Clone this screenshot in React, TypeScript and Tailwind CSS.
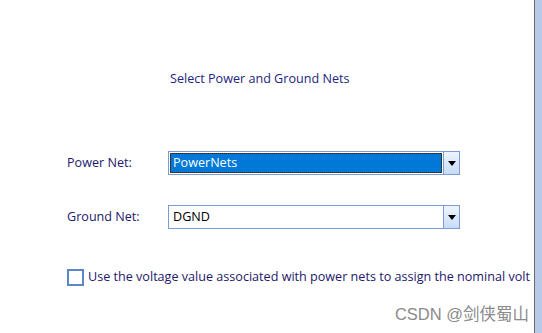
import React from 'react';

const font = { fontFamily: '"Microsoft YaHei", "Open Sans", "Noto Sans", sans-serif' };

const Arrow = () => (
  <svg width="8" height="5" viewBox="0 0 8 5">
    <path d="M0 0 H8 L4 5 Z" fill="#000" />
  </svg>
);

const Combo = ({ value, focused }: { value: string; focused?: boolean }) => (
  <div className="flex h-[24px] w-[292px] border border-[#7a9cd3] bg-white">
    <div className="flex flex-1 items-stretch p-[1px]">
      {focused ? (
        <div className="flex flex-1 items-center border border-dotted border-[#f0a030] bg-[#0078d7] pl-[2px] text-[12.6px] text-white outline outline-1 outline-black/60 -outline-offset-1">
          {value}
        </div>
      ) : (
        <div className="flex flex-1 items-center pl-[3px] text-[12.6px] text-black">{value}</div>
      )}
    </div>
    <div className="flex w-[16px] items-center justify-center border-l border-[#7a9cd3] bg-gradient-to-b from-[#eef4fd] to-[#c8dcf7]">
      <Arrow />
    </div>
  </div>
);

export default function App() {
  return (
    <div className="flex h-[333px] w-[542px] bg-white" style={font}>
      <div className="relative flex flex-1 flex-col overflow-hidden border-r border-[#6b6b6b]">
        <div className="pl-[170px] pt-[70px] text-[12.6px] leading-[18px] text-[#1c2580]">
          Select Power and Ground Nets
        </div>
        <div className="mt-[63px] flex items-center pl-[67px]">
          <div className="w-[101px] text-[12.6px] text-[#23186a]">Power Net:</div>
          <Combo value="PowerNets" focused />
        </div>
        <div className="mt-[30px] flex items-center pl-[67px]">
          <div className="w-[101px] text-[12.6px] text-[#23186a]">Ground Net:</div>
          <Combo value="DGND" />
        </div>
        <div className="mt-[39px] flex items-center whitespace-nowrap pl-[67px]">
          <div className="h-[17px] w-[17px] shrink-0 border-2 border-[#5b87c7] bg-white" />
          <div className="ml-[4px] text-[12.6px] text-[#23186a]">
            Use the voltage value associated with power nets to assign the nominal volt
          </div>
        </div>
        <div
          className="absolute right-[5px] bottom-[6px] text-[16.5px] text-[#8a8a8a]"
          style={{ fontFamily: 'Arial, "Liberation Sans", "Noto Sans CJK SC", sans-serif' }}
        >
          CSDN @剑侠蜀山
        </div>
      </div>
      <div className="w-[7px] bg-[#b9c9e8]" />
    </div>
  );
}
